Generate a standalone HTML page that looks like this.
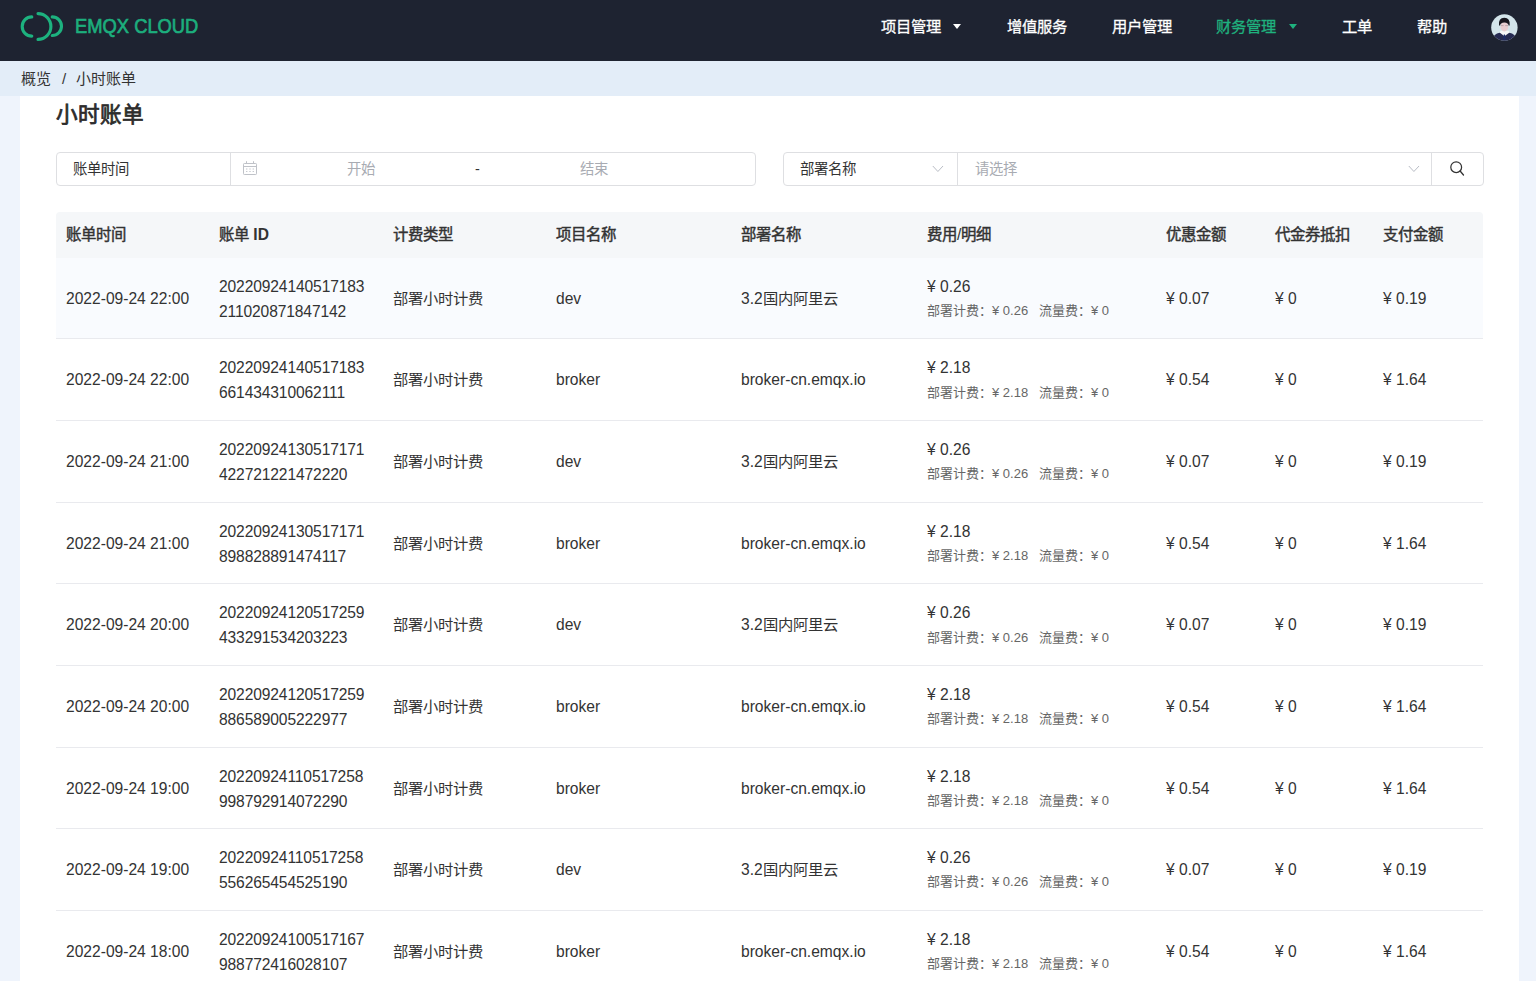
<!DOCTYPE html>
<html lang="zh-CN">
<head>
<meta charset="utf-8">
<style>
*{margin:0;padding:0;box-sizing:border-box}
html,body{width:1536px;height:981px;overflow:hidden}
body{font-family:"Liberation Sans",sans-serif;background:#eff4fc;color:#333;position:relative}
.hdr{position:absolute;left:0;top:0;width:1536px;height:61px;background:#1e2331}
.logo{position:absolute;left:0;top:0;width:70px;height:50px}
.brand{position:absolute;left:74.5px;top:13.5px;font-size:20.5px;font-weight:normal;-webkit-text-stroke:0.7px #1cae7d;line-height:24px;color:#1cae7d;white-space:nowrap;transform-origin:0 0;transform:scaleX(0.895)}
.nav{position:absolute;top:16.5px;font-size:15.3px;font-weight:500;-webkit-text-stroke:0.3px;color:#fff;white-space:nowrap;line-height:20px}
.nav.act{color:#1fb27e}
.tri{position:absolute;width:0;height:0;border-left:4px solid transparent;border-right:4px solid transparent;border-top:5px solid #fff}
.tri.g{border-top-color:#1fb27e}
.avatar{position:absolute;left:1491.3px;top:13.5px;width:27px;height:27px}
.crumb{position:absolute;left:0;top:61px;width:1536px;height:35px;background:#e3edf8}
.crumb span{position:absolute;top:8.5px;font-size:15px;color:#333;line-height:18px;white-space:nowrap}
.card{position:absolute;left:20px;top:96px;width:1499px;height:885px;background:#fff}
.title{position:absolute;left:35.5px;top:5.5px;font-size:21.6px;font-weight:normal;-webkit-text-stroke:0.75px #2c2c2c;color:#2c2c2c;line-height:26px}
.box{position:absolute;top:56px;height:34px;border:1px solid #dedfe2;border-radius:4px;background:#fff}
.box .t{position:absolute;top:7px;font-size:14.4px;line-height:18px;white-space:nowrap}
.vdiv{position:absolute;top:0;width:1px;height:32px;background:#dedfe2}
.ph{color:#a8abb2}
.tbl{position:absolute;left:36px;top:116px;width:1427px}
.th{position:relative;height:45.8px;background:#f5f7f9;border-radius:4px 4px 0 0}
.th span{position:absolute;top:13.3px;font-size:15.6px;font-weight:500;color:#333;line-height:20px;white-space:nowrap}
.row{position:relative;height:81.64px;border-bottom:1px solid #e9eaee}
.row.hl{background:#f9fbfe}
.row span{position:absolute;font-size:15.6px;color:#333;line-height:20px;white-space:nowrap}
.row .c{top:30px}
.row .l1{top:17px}
.row .l2{top:42px}
.row .s{font-size:13px;color:#666;margin-top:-0.7px}
i.z{font-style:normal;font-size:15.3px;letter-spacing:0}
.th i.z{font-size:15.4px;-webkit-text-stroke:0.45px #333}
.row .s i.z{font-size:13px}
.row .c{top:31px}
.row .l1{top:19px}
.row .l2{top:44px}
</style>
</head>
<body>
<div class="hdr">
  <svg class="logo" width="70" height="50" viewBox="0 0 70 50"><g fill="none" stroke="#1db27f" stroke-width="3.1" stroke-linecap="round"><path d="M31.8,16.9 A9.6,9.6 0 0 0 31.8,36.1"/><path d="M38,13.6 A12.9,12.9 0 0 1 38,39.4"/><path d="M52.2,16.9 A9.3,9.3 0 0 1 52.2,35.5"/></g></svg>
  <div class="brand">EMQX CLOUD</div>
  <div class="nav" style="left:881px">项目管理</div><div class="tri" style="left:953px;top:24px"></div>
  <div class="nav" style="left:1007px">增值服务</div>
  <div class="nav" style="left:1112px">用户管理</div>
  <div class="nav act" style="left:1216px">财务管理</div><div class="tri g" style="left:1289px;top:24px"></div>
  <div class="nav" style="left:1342px">工单</div>
  <div class="nav" style="left:1417px">帮助</div>
  <svg class="avatar" width="27" height="27" viewBox="0 0 27 27"><defs><clipPath id="cp"><circle cx="13.4" cy="13.5" r="13.2"/></clipPath></defs><g clip-path="url(#cp)"><rect width="27" height="27" fill="#d3e4ea"/><path d="M1,25 Q3,20 8.5,18.8 L18.5,18.8 Q24,20 26,25 L26,28 L1,28Z" fill="#262a52"/><path d="M8.6,18.6 L13.4,22.2 L18.6,18.6 L17.6,16.8 L9.6,16.8Z" fill="#f6f6f8"/><path d="M12.8,20.6 L14,20.6 L14.6,25.5 L12.2,25.5Z" fill="#1c2c6a"/><ellipse cx="13.4" cy="12.7" rx="3.9" ry="4.8" fill="#e8cdd0"/><path d="M8,11.5 Q7.2,3.8 13.3,3.8 Q19.4,3.8 18.7,11.5 L17.6,11.6 Q17.4,8.6 13.3,8.4 Q9.3,8.6 9.1,11.6Z" fill="#17161e"/><path d="M9.8,11.6 H12.6 M14.2,11.6 H17" stroke="#8f7f86" stroke-width="0.5"/></g></svg>
</div>
<div class="crumb"><span style="left:21px">概览</span><span style="left:62px">/</span><span style="left:76px">小时账单</span></div>
<div class="card">
  <div class="title">小时账单</div>
  <div class="box" style="left:36px;width:700px">
    <span class="t" style="left:16px">账单时间</span>
    <div class="vdiv" style="left:173px"></div>
    <svg style="position:absolute;left:186px;top:7px" width="16" height="16" viewBox="0 0 16 16"><g fill="none" stroke="#bfc2c8" stroke-width="1"><rect x="0.5" y="3.5" width="13" height="11" rx="0.8"/><path d="M0.5,6.5 H13.5 M3.5,1.2 V4 M10.5,1.2 V4"/></g><g fill="#c6c9cf"><rect x="3" y="8.5" width="1.4" height="1"/><rect x="6.3" y="8.5" width="1.4" height="1"/><rect x="9.6" y="8.5" width="1.4" height="1"/><rect x="3" y="11" width="1.4" height="1"/><rect x="6.3" y="11" width="1.4" height="1"/><rect x="9.6" y="11" width="1.4" height="1"/></g></svg>
    <span class="t ph" style="left:290px">开始</span>
    <span class="t" style="left:418px">-</span>
    <span class="t ph" style="left:523px">结束</span>
  </div>
  <div class="box" style="left:763px;width:701px">
    <span class="t" style="left:16px">部署名称</span>
    <svg style="position:absolute;left:148px;top:12px" width="12" height="8" viewBox="0 0 12 8"><path d="M0.8,1 L5.9,6.5 L11,1" fill="none" stroke="#b9bdc5" stroke-width="1"/></svg>
    <div class="vdiv" style="left:173px"></div>
    <span class="t ph" style="left:191px">请选择</span>
    <svg style="position:absolute;left:624px;top:12px" width="12" height="8" viewBox="0 0 12 8"><path d="M0.8,1 L5.9,6.5 L11,1" fill="none" stroke="#b9bdc5" stroke-width="1"/></svg>
    <div class="vdiv" style="left:647px"></div>
    <svg style="position:absolute;left:666px;top:7px" width="18" height="18" viewBox="0 0 18 18"><circle cx="6.2" cy="7.2" r="5.4" fill="none" stroke="#333" stroke-width="1.25"/><path d="M10.1,11 L13.5,15" stroke="#333" stroke-width="1.3" stroke-linecap="round"/></svg>
  </div>
  <div class="tbl" id="tbl">
    <div class="th">
      <span style="left:10px"><i class="z">账单时间</i></span>
      <span style="left:163px"><i class="z">账单</i> <b style="font-weight:bold;-webkit-text-stroke:0">ID</b></span>
      <span style="left:337px"><i class="z">计费类型</i></span>
      <span style="left:500px"><i class="z">项目名称</i></span>
      <span style="left:685px"><i class="z">部署名称</i></span>
      <span style="left:871px"><i class="z">费用</i>/<i class="z">明细</i></span>
      <span style="left:1110px"><i class="z">优惠金额</i></span>
      <span style="left:1219px"><i class="z">代金券抵扣</i></span>
      <span style="left:1327px"><i class="z">支付金额</i></span>
    </div>
    <!--ROWS-->
    <div class="row hl">
      <span class="c" style="left:10px">2022-09-24 22:00</span>
      <span class="l1" style="left:163px;letter-spacing:-0.12px">20220924140517183</span>
      <span class="l2" style="left:163px;letter-spacing:-0.12px">211020871847142</span>
      <span class="c" style="left:337px"><i class="z">部署小时计费</i></span>
      <span class="c" style="left:500px">dev</span>
      <span class="c" style="left:685px">3.2<i class="z">国内阿里云</i></span>
      <span class="l1" style="left:871px">¥ 0.26</span>
      <span class="l2 s" style="left:871px"><i class="z">部署计费：</i>¥ 0.26&nbsp;&nbsp;&nbsp;<i class="z">流量费：</i>¥ 0</span>
      <span class="c" style="left:1110px">¥ 0.07</span>
      <span class="c" style="left:1219px">¥ 0</span>
      <span class="c" style="left:1327px">¥ 0.19</span>
    </div>
    <div class="row">
      <span class="c" style="left:10px">2022-09-24 22:00</span>
      <span class="l1" style="left:163px;letter-spacing:-0.12px">20220924140517183</span>
      <span class="l2" style="left:163px;letter-spacing:-0.12px">661434310062111</span>
      <span class="c" style="left:337px"><i class="z">部署小时计费</i></span>
      <span class="c" style="left:500px">broker</span>
      <span class="c" style="left:685px">broker-cn.emqx.io</span>
      <span class="l1" style="left:871px">¥ 2.18</span>
      <span class="l2 s" style="left:871px"><i class="z">部署计费：</i>¥ 2.18&nbsp;&nbsp;&nbsp;<i class="z">流量费：</i>¥ 0</span>
      <span class="c" style="left:1110px">¥ 0.54</span>
      <span class="c" style="left:1219px">¥ 0</span>
      <span class="c" style="left:1327px">¥ 1.64</span>
    </div>
    <div class="row">
      <span class="c" style="left:10px">2022-09-24 21:00</span>
      <span class="l1" style="left:163px;letter-spacing:-0.12px">20220924130517171</span>
      <span class="l2" style="left:163px;letter-spacing:-0.12px">422721221472220</span>
      <span class="c" style="left:337px"><i class="z">部署小时计费</i></span>
      <span class="c" style="left:500px">dev</span>
      <span class="c" style="left:685px">3.2<i class="z">国内阿里云</i></span>
      <span class="l1" style="left:871px">¥ 0.26</span>
      <span class="l2 s" style="left:871px"><i class="z">部署计费：</i>¥ 0.26&nbsp;&nbsp;&nbsp;<i class="z">流量费：</i>¥ 0</span>
      <span class="c" style="left:1110px">¥ 0.07</span>
      <span class="c" style="left:1219px">¥ 0</span>
      <span class="c" style="left:1327px">¥ 0.19</span>
    </div>
    <div class="row">
      <span class="c" style="left:10px">2022-09-24 21:00</span>
      <span class="l1" style="left:163px;letter-spacing:-0.12px">20220924130517171</span>
      <span class="l2" style="left:163px;letter-spacing:-0.12px">898828891474117</span>
      <span class="c" style="left:337px"><i class="z">部署小时计费</i></span>
      <span class="c" style="left:500px">broker</span>
      <span class="c" style="left:685px">broker-cn.emqx.io</span>
      <span class="l1" style="left:871px">¥ 2.18</span>
      <span class="l2 s" style="left:871px"><i class="z">部署计费：</i>¥ 2.18&nbsp;&nbsp;&nbsp;<i class="z">流量费：</i>¥ 0</span>
      <span class="c" style="left:1110px">¥ 0.54</span>
      <span class="c" style="left:1219px">¥ 0</span>
      <span class="c" style="left:1327px">¥ 1.64</span>
    </div>
    <div class="row">
      <span class="c" style="left:10px">2022-09-24 20:00</span>
      <span class="l1" style="left:163px;letter-spacing:-0.12px">20220924120517259</span>
      <span class="l2" style="left:163px;letter-spacing:-0.12px">433291534203223</span>
      <span class="c" style="left:337px"><i class="z">部署小时计费</i></span>
      <span class="c" style="left:500px">dev</span>
      <span class="c" style="left:685px">3.2<i class="z">国内阿里云</i></span>
      <span class="l1" style="left:871px">¥ 0.26</span>
      <span class="l2 s" style="left:871px"><i class="z">部署计费：</i>¥ 0.26&nbsp;&nbsp;&nbsp;<i class="z">流量费：</i>¥ 0</span>
      <span class="c" style="left:1110px">¥ 0.07</span>
      <span class="c" style="left:1219px">¥ 0</span>
      <span class="c" style="left:1327px">¥ 0.19</span>
    </div>
    <div class="row">
      <span class="c" style="left:10px">2022-09-24 20:00</span>
      <span class="l1" style="left:163px;letter-spacing:-0.12px">20220924120517259</span>
      <span class="l2" style="left:163px;letter-spacing:-0.12px">886589005222977</span>
      <span class="c" style="left:337px"><i class="z">部署小时计费</i></span>
      <span class="c" style="left:500px">broker</span>
      <span class="c" style="left:685px">broker-cn.emqx.io</span>
      <span class="l1" style="left:871px">¥ 2.18</span>
      <span class="l2 s" style="left:871px"><i class="z">部署计费：</i>¥ 2.18&nbsp;&nbsp;&nbsp;<i class="z">流量费：</i>¥ 0</span>
      <span class="c" style="left:1110px">¥ 0.54</span>
      <span class="c" style="left:1219px">¥ 0</span>
      <span class="c" style="left:1327px">¥ 1.64</span>
    </div>
    <div class="row">
      <span class="c" style="left:10px">2022-09-24 19:00</span>
      <span class="l1" style="left:163px;letter-spacing:-0.12px">20220924110517258</span>
      <span class="l2" style="left:163px;letter-spacing:-0.12px">998792914072290</span>
      <span class="c" style="left:337px"><i class="z">部署小时计费</i></span>
      <span class="c" style="left:500px">broker</span>
      <span class="c" style="left:685px">broker-cn.emqx.io</span>
      <span class="l1" style="left:871px">¥ 2.18</span>
      <span class="l2 s" style="left:871px"><i class="z">部署计费：</i>¥ 2.18&nbsp;&nbsp;&nbsp;<i class="z">流量费：</i>¥ 0</span>
      <span class="c" style="left:1110px">¥ 0.54</span>
      <span class="c" style="left:1219px">¥ 0</span>
      <span class="c" style="left:1327px">¥ 1.64</span>
    </div>
    <div class="row">
      <span class="c" style="left:10px">2022-09-24 19:00</span>
      <span class="l1" style="left:163px;letter-spacing:-0.12px">20220924110517258</span>
      <span class="l2" style="left:163px;letter-spacing:-0.12px">556265454525190</span>
      <span class="c" style="left:337px"><i class="z">部署小时计费</i></span>
      <span class="c" style="left:500px">dev</span>
      <span class="c" style="left:685px">3.2<i class="z">国内阿里云</i></span>
      <span class="l1" style="left:871px">¥ 0.26</span>
      <span class="l2 s" style="left:871px"><i class="z">部署计费：</i>¥ 0.26&nbsp;&nbsp;&nbsp;<i class="z">流量费：</i>¥ 0</span>
      <span class="c" style="left:1110px">¥ 0.07</span>
      <span class="c" style="left:1219px">¥ 0</span>
      <span class="c" style="left:1327px">¥ 0.19</span>
    </div>
    <div class="row">
      <span class="c" style="left:10px">2022-09-24 18:00</span>
      <span class="l1" style="left:163px;letter-spacing:-0.12px">20220924100517167</span>
      <span class="l2" style="left:163px;letter-spacing:-0.12px">988772416028107</span>
      <span class="c" style="left:337px"><i class="z">部署小时计费</i></span>
      <span class="c" style="left:500px">broker</span>
      <span class="c" style="left:685px">broker-cn.emqx.io</span>
      <span class="l1" style="left:871px">¥ 2.18</span>
      <span class="l2 s" style="left:871px"><i class="z">部署计费：</i>¥ 2.18&nbsp;&nbsp;&nbsp;<i class="z">流量费：</i>¥ 0</span>
      <span class="c" style="left:1110px">¥ 0.54</span>
      <span class="c" style="left:1219px">¥ 0</span>
      <span class="c" style="left:1327px">¥ 1.64</span>
    </div>
    <!--/ROWS-->
  </div>
</div>
</body>
</html>
